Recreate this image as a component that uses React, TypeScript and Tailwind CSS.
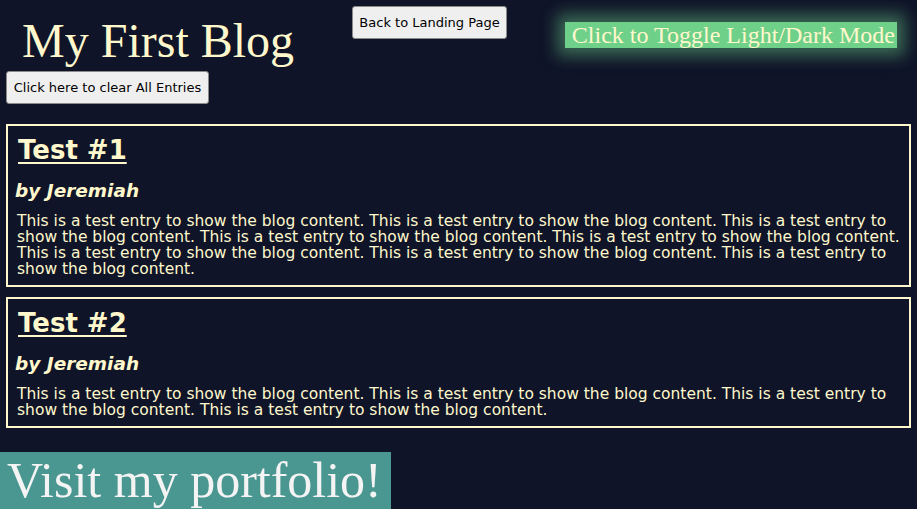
import React from "react";

const body =
  "This is a test entry to show the blog content. This is a test entry to show the blog content. This is a test entry to show the blog content. This is a test entry to show the blog content. This is a test entry to show the blog content. This is a test entry to show the blog content. This is a test entry to show the blog content. This is a test entry to show the blog content.";
const body2 =
  "This is a test entry to show the blog content. This is a test entry to show the blog content. This is a test entry to show the blog content. This is a test entry to show the blog content.";

function Card({ title, text }: { title: string; text: string }) {
  return (
    <div className="mx-[6px] border-2 border-[#fff8cc] pl-[9px] pr-[4px] pt-[9px] pb-[8px]">
      <h2 className="ml-[1px] text-[26px] leading-[30px] font-bold underline decoration-2 underline-offset-[3px] font-['DejaVu_Sans',sans-serif]">
        {title}
      </h2>
      <h3 className="mt-[14px] -ml-[2px] text-[18.5px] leading-[24px] font-bold italic font-['DejaVu_Sans',sans-serif]">
        by Jeremiah
      </h3>
      <p className="mt-[10px] text-[15.5px] leading-[16px] font-['DejaVu_Sans',sans-serif]">{text}</p>
    </div>
  );
}

export default function App() {
  return (
    <div className="min-h-[509px] w-full bg-[#0f1428] text-[#fff8cc] overflow-hidden">
      <div className="flex items-start">
        <h1 className="ml-[22px] mt-[14px] w-[330px] text-[48px] leading-[53px] font-['Liberation_Serif',serif]">
          My First Blog
        </h1>
        <button className="mt-[6px] h-[33px] w-[155px] rounded-[3px] border border-[#8a8a8a] bg-[#efefef] text-[13px] text-black font-['DejaVu_Sans',sans-serif]">
          Back to Landing Page
        </button>
        <div className="ml-auto mr-[20px] mt-[22px] h-[26px] bg-[#6fd08a] pl-[7px] pr-[2px] text-[24px] leading-[26px] text-[#fff8cc] font-['Liberation_Serif',serif] shadow-[0_0_16px_8px_rgba(111,208,138,0.45)]">
          Click to Toggle Light/Dark Mode
        </div>
      </div>
      <button className="ml-[6px] mt-[4px] h-[33px] w-[203px] rounded-[3px] border border-[#8a8a8a] bg-[#efefef] text-[13px] text-black font-['DejaVu_Sans',sans-serif]">
        Click here to clear All Entries
      </button>
      <div className="mt-[20px] flex flex-col gap-[10px]">
        <Card title="Test #1" text={body} />
        <Card title="Test #2" text={body2} />
      </div>
      <div className="mt-[24px] inline-block bg-[#4a9690] pl-[7px] pr-[9px] text-[50px] leading-[57px] text-[#f4f4f4] font-['Liberation_Serif',serif]">
        Visit my portfolio!
      </div>
    </div>
  );
}
